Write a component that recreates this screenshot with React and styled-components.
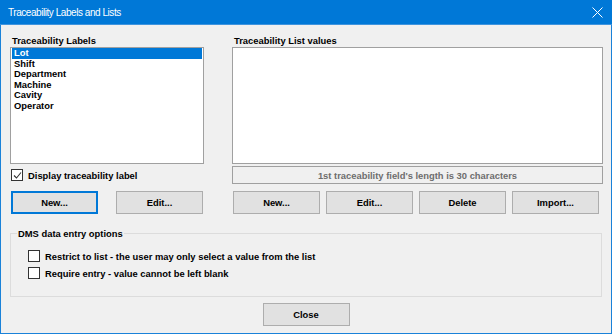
import React from "react";
import styled, { createGlobalStyle } from "styled-components";

const GlobalStyle = createGlobalStyle`
    html, body {
        margin: 0;
        padding: 0;
        background: #f0f0f0;
    }
    * {
        box-sizing: border-box;
    }
`;

const labels = ["Lot", "Shift", "Department", "Machine", "Cavity", "Operator"];

const CheckBox = ({ checked }) => (
    <Box>
        {checked && (
            <svg width="9" height="9" viewBox="0 0 9 9">
                <path d="M1 4.5 L3.5 7 L8 1.5" fill="none" stroke="#333" strokeWidth="1.1" />
            </svg>
        )}
    </Box>
);

const App = () => {
    return (
        <>
            <GlobalStyle />
            <Window>
                <TitleBar>
                    <Title>Traceability Labels and Lists</Title>
                    <svg width="11" height="11" viewBox="0 0 11 11">
                        <path d="M0.5 0.5 L10.5 10.5 M10.5 0.5 L0.5 10.5" stroke="#fff" strokeWidth="1" />
                    </svg>
                </TitleBar>

                <Body>
                    <Columns>
                        <Column>
                            <Caption>Traceability Labels</Caption>
                            <ListBox>
                                {labels.map((item, i) => (
                                    <ListItem key={item} selected={i === 0}>{item}</ListItem>
                                ))}
                            </ListBox>
                            <CheckRow>
                                <CheckBox checked />
                                <span>Display traceability label</span>
                            </CheckRow>
                            <ButtonRow>
                                <Button focused>New...</Button>
                                <Button>Edit...</Button>
                            </ButtonRow>
                        </Column>

                        <Column>
                            <Caption>Traceability List values</Caption>
                            <ListBox />
                            <Status>1st traceability field's length is 30 characters</Status>
                            <ButtonRow gap="6px">
                                <Button>New...</Button>
                                <Button>Edit...</Button>
                                <Button>Delete</Button>
                                <Button>Import...</Button>
                            </ButtonRow>
                        </Column>
                    </Columns>

                    <Group>
                        <Legend>DMS data entry options</Legend>
                        <GroupCheck>
                            <CheckBox />
                            <span>Restrict to list - the user may only select a value from the list</span>
                        </GroupCheck>
                        <GroupCheck>
                            <CheckBox />
                            <span>Require entry - value cannot be left blank</span>
                        </GroupCheck>
                    </Group>

                    <Footer>
                        <Button>Close</Button>
                    </Footer>
                </Body>
            </Window>
        </>
    );
};

const Window = styled.div`
    width: 612px;
    height: 334px;
    background: #f0f0f0;
    border: 1px solid #1a82d9;
    border-top: none;
    display: flex;
    flex-direction: column;
    font-family: "Liberation Sans", Arial, sans-serif;
    font-size: 9.4px;
    font-weight: bold;
    color: #000;
`;

const TitleBar = styled.div`
    height: 25px;
    margin: 0 -1px;
    background: #0078d7;
    border-bottom: 1px solid #3f94de;
    display: flex;
    align-items: center;
    justify-content: space-between;
    padding: 0 9px 0 8px;
`;

const Title = styled.div`
    color: #fff;
    font-size: 10px;
    font-weight: normal;
    letter-spacing: -0.45px;
`;

const Body = styled.div`
    padding: 10px 8px 0 9px;
    display: flex;
    flex-direction: column;
`;

const Columns = styled.div`
    display: grid;
    grid-template-columns: 194px 371px;
    column-gap: 28px;
`;

const Column = styled.div`
    display: flex;
    flex-direction: column;
`;

const Caption = styled.div`
    height: 12px;
    line-height: 12px;
    padding-left: 2px;
`;

const ListBox = styled.div`
    height: 117px;
    background: #fff;
    border: 1px solid #a0a0a0;
    padding: 0 1px;
    line-height: 10.6px;
`;

const ListItem = styled.div`
    padding-left: 2px;
    background: ${(p) => (p.selected ? "#0078d7" : "transparent")};
    color: ${(p) => (p.selected ? "#fff" : "#000")};
`;

const CheckRow = styled.label`
    height: 20px;
    display: flex;
    align-items: center;
    gap: 5px;
    padding-left: 1px;
    margin-top: 1px;
`;

const Box = styled.span`
    width: 12px;
    height: 12px;
    border: 1px solid #333;
    background: #fff;
    display: inline-flex;
    align-items: center;
    justify-content: center;
    flex: none;
`;

const Status = styled.div`
    height: 18px;
    margin-top: 2px;
    margin-bottom: 1px;
    border: 1px solid #a0a0a0;
    display: flex;
    align-items: center;
    justify-content: center;
    color: #6d6d6d;
`;

const ButtonRow = styled.div`
    display: flex;
    justify-content: ${(p) => (p.gap ? "flex-start" : "space-between")};
    gap: ${(p) => p.gap || "0"};
    padding: 0 1px;
    margin-top: 6px;
`;

const Button = styled.button`
    width: 87px;
    height: 23px;
    background: #e1e1e1;
    border: ${(p) => (p.focused ? "2px solid #0078d7" : "1px solid #adadad")};
    font-family: inherit;
    font-size: 9.4px;
    font-weight: bold;
    color: #000;
    padding: 0;
`;

const Group = styled.fieldset`
    margin: 14px 1px 0 0;
    height: 69px;
    border: 1px solid #dcdcdc;
    padding: 11px 0 0 17px;
    display: flex;
    flex-direction: column;
    gap: 5px;
`;

const Legend = styled.legend`
    padding: 0 1px;
    margin-left: -11px;
    font-size: 9.4px;
`;

const GroupCheck = styled.label`
    display: flex;
    align-items: center;
    gap: 5px;
    height: 12px;
`;

const Footer = styled.div`
    display: flex;
    justify-content: center;
    padding-top: 6px;
    padding-right: 1px;
`;

export default App;
